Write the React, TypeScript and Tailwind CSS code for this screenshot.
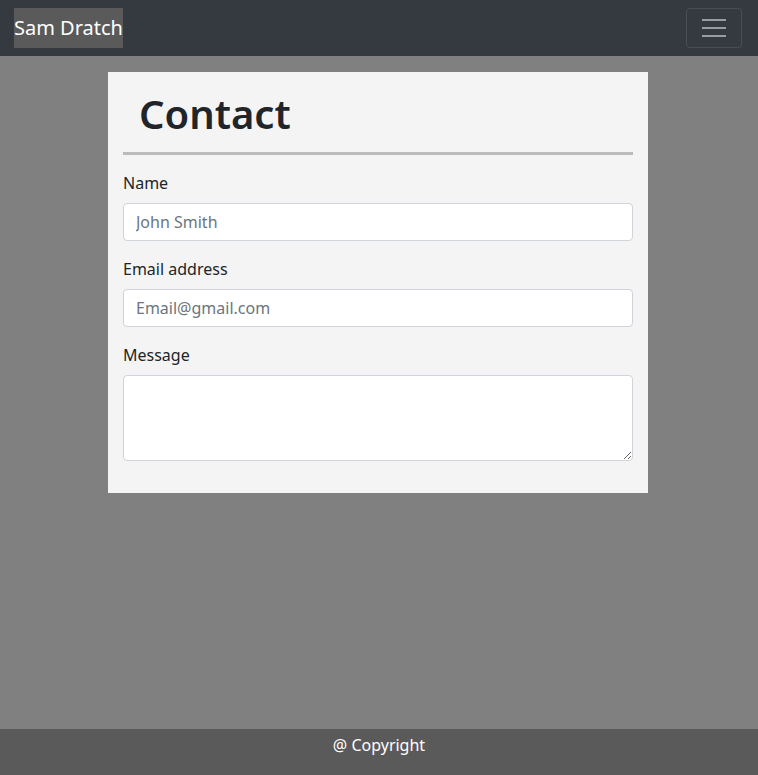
import { useState } from "react";

const font = { fontFamily: '"Noto Sans", "Open Sans", sans-serif' };

function Navbar() {
  return (
    <nav className="flex h-14 items-center justify-between bg-[#343a40] pl-[14px] pr-4">
      <a href="#" className="flex h-10 items-center bg-[#5a5a5a] text-[20px] leading-none text-white">
        Sam Dratch
      </a>
      <button className="flex h-10 w-14 flex-col items-center justify-center gap-[6px] rounded-[4px] border border-white/10">
        <span className="block h-[2px] w-6 bg-white/50" />
        <span className="block h-[2px] w-6 bg-white/50" />
        <span className="block h-[2px] w-6 bg-white/50" />
      </button>
    </nav>
  );
}

function Field({ label, placeholder, area }: { label: string; placeholder?: string; area?: boolean }) {
  return (
    <div className="mb-4">
      <label className="mb-2 block text-[16px] leading-6 text-[#212529]">{label}</label>
      {area ? (
        <textarea
          rows={3}
          className="block h-[86px] w-full rounded-[4px] border border-[#ced4da] bg-white px-3 py-[6px] text-[16px] outline-none"
        />
      ) : (
        <input
          placeholder={placeholder}
          className="block h-[38px] w-full rounded-[4px] border border-[#ced4da] bg-white px-3 text-[16px] text-[#495057] outline-none placeholder:text-[#6c757d]"
        />
      )}
    </div>
  );
}

export default function App() {
  const [sent] = useState(false);
  return (
    <div className="flex min-h-[775px] flex-col bg-[#808080]" style={font}>
      <Navbar />
      <main className="flex-1 pt-4">
        <div className="ml-[108px] w-[540px] bg-[#f4f4f4] px-[15px] pb-4 pt-[18px]">
          <h1 className="px-4 pb-[14px] text-[40px] font-semibold leading-[1.2] text-[#212529]">Contact</h1>
          <hr className="mb-4 border-t-[3px] border-[#bbbbbb]" />
          <form onSubmit={(e) => e.preventDefault()}>
            <Field label="Name" placeholder="John Smith" />
            <Field label="Email address" placeholder="Email@gmail.com" />
            <Field label="Message" area />
          </form>
          {sent && <p>Thanks!</p>}
        </div>
      </main>
      <footer className="h-[46px] bg-[#5a5a5a] pt-1 text-center text-[16px] leading-6 text-white">
        @ Copyright
      </footer>
    </div>
  );
}
